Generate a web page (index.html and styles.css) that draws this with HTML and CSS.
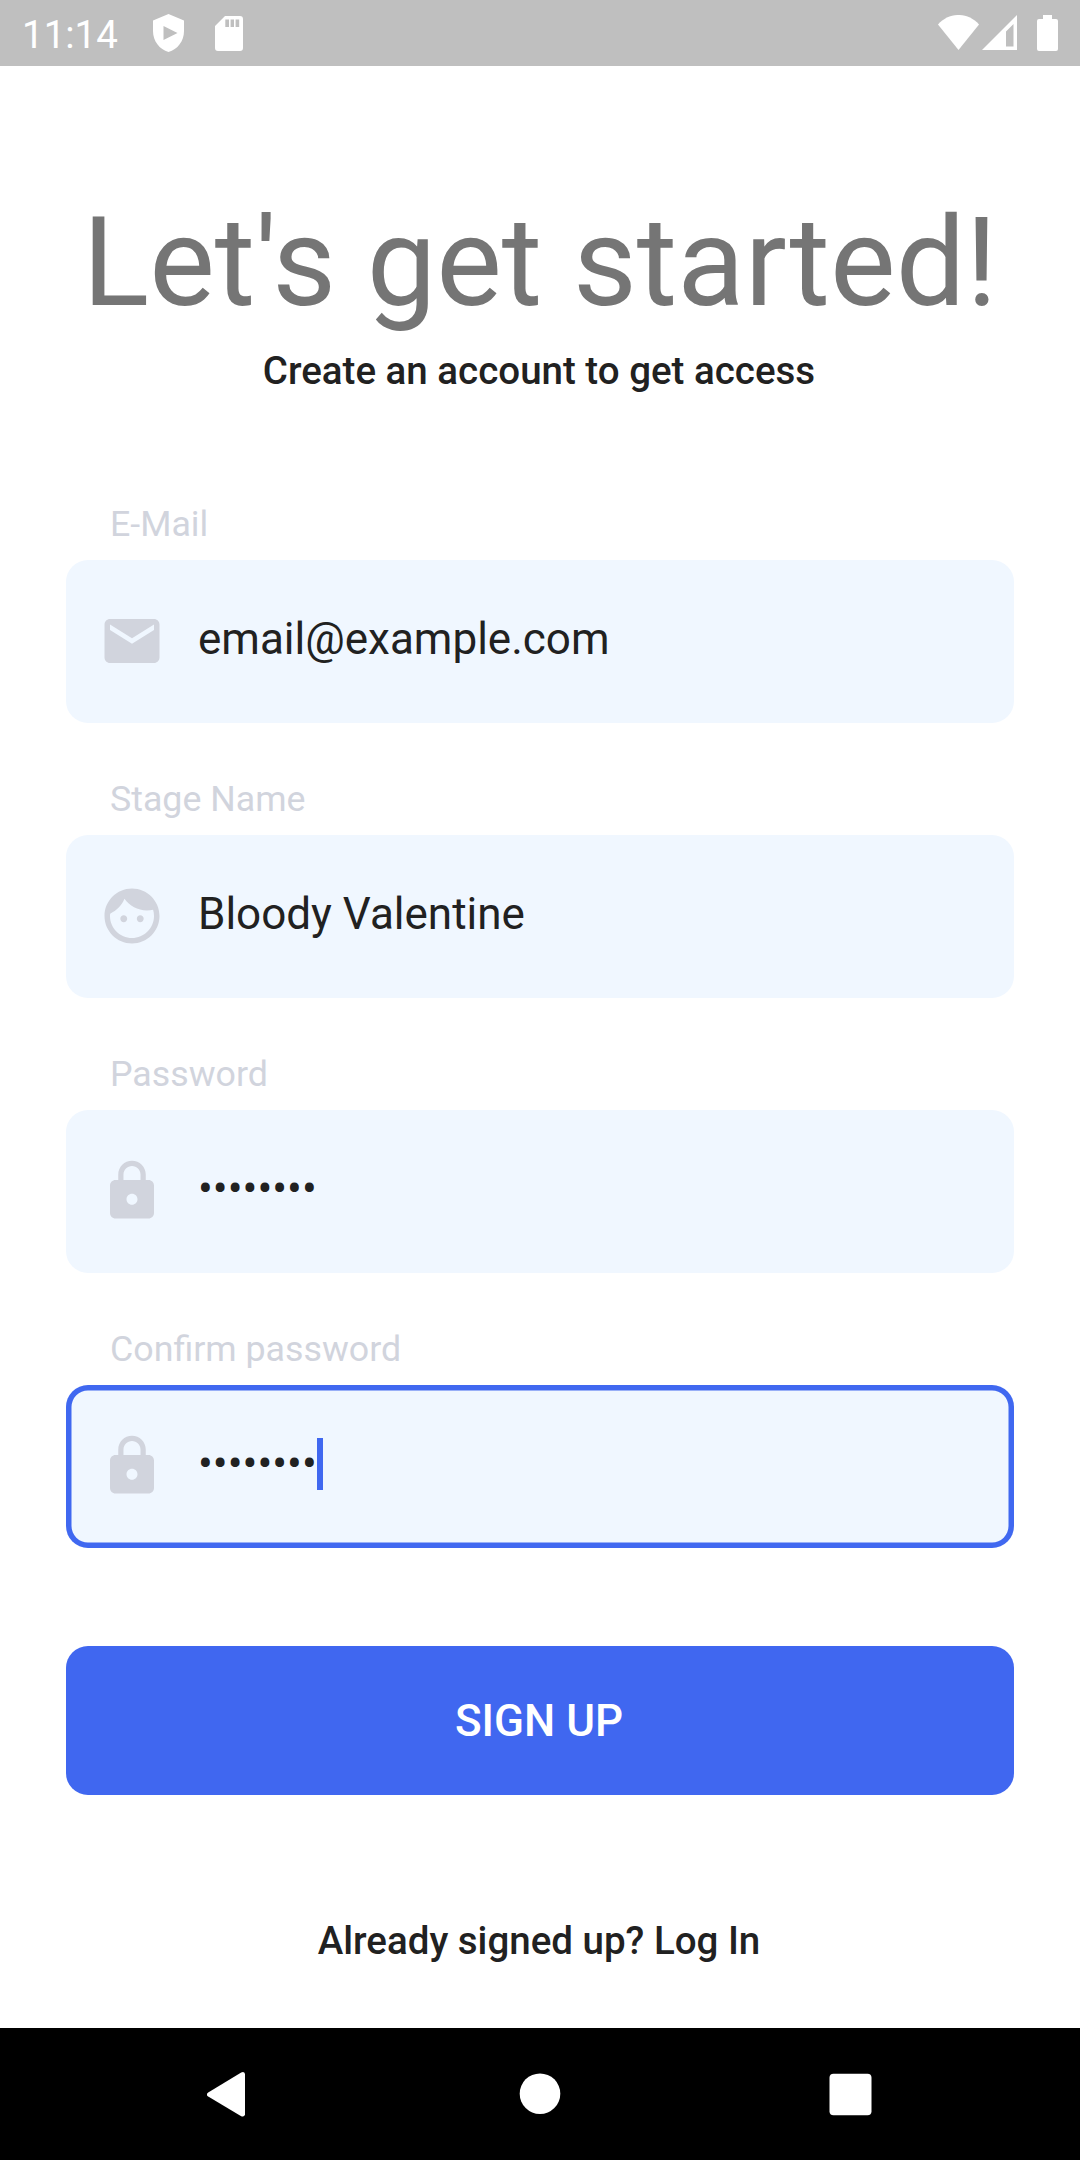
FILE: index.html
```html
<!DOCTYPE html>
<html lang="en">
<head>
<meta charset="utf-8">
<title>Sign up</title>
<link rel="stylesheet" href="styles.css">
</head>
<body>
<div class="screen">
  <header class="status-bar">
    <div class="status-left">
      <span class="clock">11:14</span>
      <svg class="shield" viewBox="0 0 31 38"><path fill-rule="evenodd" d="M15.500 0L31 6.500V17C31 27 24.500 35.500 15.500 38C6.500 35.500 0 27 0 17V6.500ZM10.500 12V26L24.500 19Z"/></svg>
      <svg class="sdcard" viewBox="0 0 28 35"><path fill-rule="evenodd" d="M10 0H25Q28 0 28 3V32Q28 35 25 35H3Q0 35 0 32V10ZM10.300 3.500V11H14V3.500ZM15.600 3.500V11H19V3.500ZM20.600 3.500V11H24.200V3.500Z"/></svg>
    </div>
    <div class="status-right">
      <svg class="wifi" viewBox="0 0 41 35"><path d="M0 9.500C11-3.200 30-3.200 41 9.500L20.500 35Z"/></svg>
      <svg class="signal" viewBox="0 0 35 35"><path fill-rule="evenodd" d="M35 0V35H0ZM31.500 9L24 16.500V31.500H31.500Z"/></svg>
      <svg class="battery" viewBox="0 0 21 36"><path d="M6 0H15V4H19Q21 4 21 6V34Q21 36 19 36H2Q0 36 0 34V6Q0 4 2 4H6Z"/></svg>
    </div>
  </header>
  <main class="content">
    <h1 class="title">Let's get started!</h1>
    <p class="subtitle">Create an account to get access</p>
    <form class="form">
      <div class="field">
        <div class="label">E-Mail</div>
        <div class="box">
          <svg class="icon" viewBox="0 0 24 24"><path d="M20 4H4c-1.100 0-1.990.9-1.990 2L2 18c0 1.100.9 2 2 2h16c1.100 0 2-.9 2-2V6c0-1.100-.9-2-2-2zm0 4l-8 5-8-5V6l8 5 8-5v2z"/></svg>
          <span class="value">email@example.com</span>
        </div>
      </div>
      <div class="field">
        <div class="label">Stage Name</div>
        <div class="box">
          <svg class="icon" viewBox="0 0 24 24"><path d="M9 11.750c-.69 0-1.250.56-1.250 1.250s.56 1.250 1.250 1.250 1.250-.56 1.250-1.250-.56-1.250-1.250-1.250zm6 0c-.69 0-1.250.56-1.250 1.250s.56 1.250 1.250 1.250 1.250-.56 1.250-1.250-.56-1.250-1.250-1.250zM12 2C6.480 2 2 6.480 2 12s4.480 10 10 10 10-4.480 10-10S17.520 2 12 2zm0 18c-4.410 0-8-3.590-8-8 0-.29.02-.58.05-.86 2.360-1.050 4.230-2.980 5.210-5.370C11.070 8.330 14.050 10 17.420 10c.78 0 1.530-.09 2.250-.26.21.71.33 1.470.33 2.260 0 4.410-3.590 8-8 8z"/></svg>
          <span class="value">Bloody Valentine</span>
        </div>
      </div>
      <div class="field">
        <div class="label">Password</div>
        <div class="box">
          <svg class="icon" viewBox="0 0 24 24"><path d="M18 8h-1V6c0-2.760-2.240-5-5-5S7 3.240 7 6v2H6c-1.100 0-2 .9-2 2v10c0 1.100.9 2 2 2h12c1.100 0 2-.9 2-2V10c0-1.100-.9-2-2-2zm-6 9c-1.100 0-2-.9-2-2s.9-2 2-2 2 .9 2 2-.9 2-2 2zm3.100-9H8.900V6c0-1.710 1.390-3.100 3.100-3.100 1.710 0 3.100 1.390 3.100 3.100v2z"/></svg>
          <span class="value">••••••••</span>
        </div>
      </div>
      <div class="field">
        <div class="label">Confirm password</div>
        <div class="box focused">
          <svg class="icon" viewBox="0 0 24 24"><path d="M18 8h-1V6c0-2.760-2.240-5-5-5S7 3.240 7 6v2H6c-1.100 0-2 .9-2 2v10c0 1.100.9 2 2 2h12c1.100 0 2-.9 2-2V10c0-1.100-.9-2-2-2zm-6 9c-1.100 0-2-.9-2-2s.9-2 2-2 2 .9 2 2-.9 2-2 2zm3.100-9H8.900V6c0-1.710 1.390-3.100 3.100-3.100 1.710 0 3.100 1.390 3.100 3.100v2z"/></svg>
          <span class="value">••••••••</span><span class="caret"></span>
        </div>
      </div>
      <button class="submit" type="button">SIGN UP</button>
    </form>
    <p class="login">Already signed up? Log In</p>
  </main>
  <nav class="nav-bar">
    <svg class="nav-icon" viewBox="2.300 0 46 46"><path d="M40.300 3V43.500Q39.500 46.500 36.500 45.200L3.500 25.500Q.8 23.500 3.500 21.500L36.500 1.500Q39.500 0 40.300 3Z"/></svg>
    <svg class="nav-icon" viewBox="0 0 46 46"><circle cx="23" cy="22.700" r="20.300"/></svg>
    <svg class="nav-icon" viewBox="0 0 46 46"><rect x="2.500" y="2.800" width="42" height="41.500" rx="4"/></svg>
  </nav>
</div>
</body>
</html>
```
FILE: styles.css
```css
* {
  box-sizing: border-box;
}

body {
  margin: 0;
  background: #fff;
  font-family: Roboto, "Liberation Sans", sans-serif;
  color: #212121;
}

.screen {
  display: flex;
  flex-direction: column;
  width: 1080px;
  height: 2160px;
  overflow: hidden;
}

.status-bar {
  display: flex;
  justify-content: space-between;
  height: 66px;
  padding: 0 22px;
  background: #bfbfbf;
  color: #fff;
  fill: #fff;
}

.status-left,
.status-right {
  display: flex;
  align-items: center;
}

.status-right {
  padding-bottom: 1px;
}

.clock {
  width: 131px;
  padding-top: 3px;
  font-size: 38.500px;
  line-height: 46px;
}

.shield {
  width: 31px;
  height: 38px;
}

.sdcard {
  width: 28px;
  height: 35px;
  margin: 1px 0 0 31px;
}

.wifi {
  width: 41px;
  height: 35px;
  margin-right: 3px;
}

.signal {
  width: 35px;
  height: 35px;
  margin-right: 20px;
}

.battery {
  width: 21px;
  height: 36px;
  margin-top: 1px;
}

.content {
  flex: 1;
  padding: 124px 66px 0;
  text-align: center;
}

.title {
  margin: 0;
  font-size: 123.750px;
  font-weight: 400;
  line-height: 145px;
  color: #757575;
  white-space: nowrap;
}

.subtitle,
.login {
  margin: 0;
  padding-right: 2px;
  font-size: 38.500px;
  font-weight: 500;
  line-height: 46px;
}

.subtitle {
  margin-top: 13px;
}

.form {
  display: flex;
  flex-direction: column;
  margin-top: 103px;
  text-align: left;
}

.field {
  height: 275px;
}

.label {
  height: 63px;
  padding-left: 44px;
  font-size: 35.750px;
  line-height: 54px;
  color: #d1d4dd;
}

.box {
  display: flex;
  align-items: center;
  height: 162.500px;
  padding-left: 33px;
  background: #f0f7ff;
  border-radius: 22px;
}

.focused {
  box-shadow: inset 0 0 0 5.500px #4068f0;
}

.icon {
  width: 66px;
  height: 66px;
  margin-right: 33px;
  fill: #d1d4dd;
}

.value {
  padding-bottom: 5px;
  font-size: 44px;
  line-height: 52px;
}

.caret {
  width: 6px;
  height: 52px;
  margin-bottom: 4px;
  background: #4068f0;
}

.submit {
  height: 149px;
  margin-top: 49px;
  padding: 0 2px 0 0;
  border: 0;
  border-radius: 22px;
  background: #4067f0;
  color: #fff;
  font-family: inherit;
  font-size: 44px;
  font-weight: 500;
}

.login {
  margin-top: 123px;
}

.nav-bar {
  display: flex;
  justify-content: space-between;
  align-items: center;
  height: 132px;
  padding: 0 207px;
  background: #000;
  fill: #fff;
}

.nav-icon {
  width: 46px;
  height: 46px;
}
```
